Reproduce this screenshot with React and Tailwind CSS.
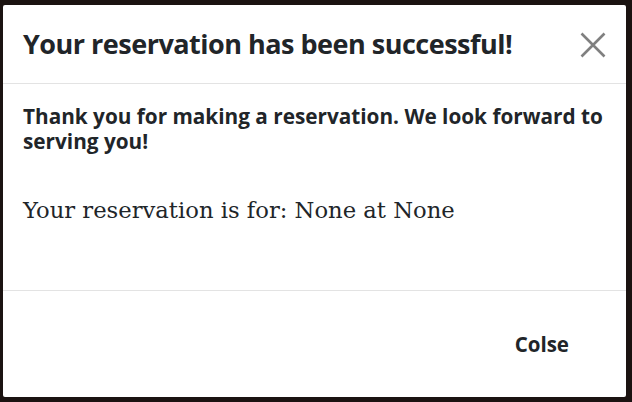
import React from 'react';

const CloseIcon = () => (
  <svg width="26" height="26" viewBox="0 0 26 26" fill="none">
    <path d="M1.5 1.5 L24.5 24.5 M24.5 1.5 L1.5 24.5" stroke="#808080" strokeWidth="2.6" />
  </svg>
);

export default function App() {
  return (
    <div className="w-[632px] h-[402px] overflow-hidden bg-[#1b1311] pt-[5px] pl-[3px]">
      <div className="w-[623px] h-[392px] bg-white flex flex-col rounded-[2px]">
        <div className="h-[79px] flex items-center justify-between pl-5 pr-[20px] border-b border-[#e3e3e3]">
          <h1 className="font-['Open_Sans',sans-serif] font-bold text-[27px] tracking-[-0.5px] text-[#212529]">
            Your reservation has been successful!
          </h1>
          <button type="button" className="mt-[1px]">
            <CloseIcon />
          </button>
        </div>

        <div className="h-[206px] px-5 pt-5">
          <p className="font-['Open_Sans',sans-serif] font-bold text-[20.75px] leading-[25px] text-[#212529]">
            Thank you for making a reservation. We look forward to serving you!
          </p>
          <p className="mt-[38px] font-['DejaVu_Serif',serif] text-[22.7px] leading-[36px] text-[#212529]">
            Your reservation is for: None at None
          </p>
        </div>

        <div className="flex-1 flex items-center justify-end border-t border-[#e3e3e3] pr-[41px]">
          <button type="button" className="px-4 py-2 font-['Open_Sans',sans-serif] font-bold text-[20.5px] text-[#212529]">
            Colse
          </button>
        </div>
      </div>
    </div>
  );
}
